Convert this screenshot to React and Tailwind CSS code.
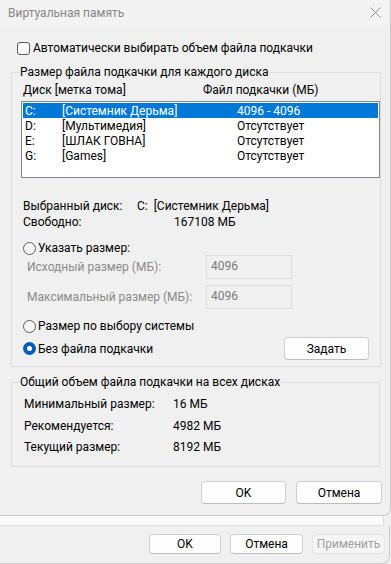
import React from "react";

const font = { fontFamily: 'Roboto, "Noto Sans", sans-serif' };

const disks = [
  { letter: "C:", label: "[Системник Дерьма]", size: "4096 - 4096", selected: true },
  { letter: "D:", label: "[Мультимедия]", size: "Отсутствует" },
  { letter: "E:", label: "[ШЛАК ГОВНА]", size: "Отсутствует" },
  { letter: "G:", label: "[Games]", size: "Отсутствует" },
];

const Radio = ({ checked, label }) => (
  <div className="flex items-center h-4">
    {checked ? (
      <span className="w-[13px] h-[13px] rounded-full bg-[#005fb8] flex items-center justify-center">
        <span className="w-[5px] h-[5px] rounded-full bg-white" />
      </span>
    ) : (
      <span className="w-[13px] h-[13px] rounded-full border border-[#5d5d5d] bg-[#f7f7f7]" />
    )}
    <span className="ml-[2px]">{label}</span>
  </div>
);

const Button = ({ children, className = "", disabled }) => (
  <button
    type="button"
    className={
      "flex items-center justify-center rounded-[4px] border text-[12px] " +
      (disabled
        ? "bg-[#f5f5f5] border-[#e5e5e5] text-[#a0a0a0] "
        : "bg-[#fdfdfd] border-[#d0d0d0] border-b-[#bcbcbc] text-black ") +
      className
    }
  >
    {children}
  </button>
);

const SizeInput = ({ label, value }) => (
  <div className="flex items-center">
    <span className="w-[179px] ml-[15px] text-[#8a8a8a]">{label}</span>
    <div className="w-[86px] h-[24px] border border-[#dcdcdc] bg-[#f0f0f0] text-[#7a7a7a] pl-[4px] pt-[2px] leading-4">
      {value}
    </div>
  </div>
);

export default function App() {
  return (
    <div
      className="w-[391px] h-[564px] bg-[#f0f0f0] text-[12px] leading-4 text-black overflow-hidden"
      style={font}
    >
      <div className="w-[391px] h-[516px] border-r border-b border-[#c8c8c8] rounded-br-[8px] flex flex-col">
        <div className="h-[25px] bg-[#f3f3f3] flex items-center justify-between pl-[8px] pr-[9px]">
          <span className="text-[#868686]">Виртуальная память</span>
          <svg width="11" height="11" viewBox="0 0 11 11">
            <path d="M0.5 0.5 L10.5 10.5 M10.5 0.5 L0.5 10.5" stroke="#8a8a8a" strokeWidth="1" />
          </svg>
        </div>

        <div className="flex items-center mt-[15px] ml-[17px]">
          <span className="w-[13px] h-[13px] rounded-[3px] border border-[#5a5a5a] bg-[#fbfbfb]" />
          <span className="ml-[3px]">Автоматически выбирать объем файла подкачки</span>
        </div>

        <fieldset className="ml-[11px] mt-[8px] w-[369px] h-[303px] border border-[#dcdcdc] px-0">
          <legend className="ml-[7px] px-[1px]">Размер файла подкачки для каждого диска</legend>
          <div className="flex mt-[2px] ml-[11px]">
            <span className="w-[180px]">Диск [метка тома]</span>
            <span>Файл подкачки (МБ)</span>
          </div>
          <div className="ml-[9px] mt-[3px] w-[359px] h-[77px] border border-[#828790] bg-white p-[1px]">
            {disks.map((d) => (
              <div
                key={d.letter}
                className={
                  "flex items-center h-[15px] leading-[14px] pl-[2px] " +
                  (d.selected ? "bg-[#0078d7] text-white" : "")
                }
              >
                <span className="w-[37px]">{d.letter}</span>
                <span className="w-[175px]">{d.label}</span>
                <span>{d.size}</span>
              </div>
            ))}
          </div>

          <div className="mt-[20px] ml-[11px]">
            <div className="flex">
              <span className="w-[114px]">Выбранный диск:</span>
              <span>C:&nbsp;&nbsp;[Системник Дерьма]</span>
            </div>
            <div className="flex">
              <span className="w-[151px]">Свободно:</span>
              <span>167108 МБ</span>
            </div>
          </div>

          <div className="mt-[10px] ml-[11px]">
            <Radio label="Указать размер:" />
          </div>
          <div className="mt-[-1px]">
            <SizeInput label="Исходный размер (МБ):" value="4096" />
          </div>
          <div className="mt-[6px]">
            <SizeInput label="Максимальный размер (МБ):" value="4096" />
          </div>
          <div className="mt-[9px] ml-[11px]">
            <Radio label="Размер по выбору системы" />
          </div>
          <div className="flex items-center mt-[3px]">
            <div className="ml-[11px] w-[261px]">
              <Radio checked label="Без файла подкачки" />
            </div>
            <Button className="w-[85px] h-[23px]">Задать</Button>
          </div>
        </fieldset>

        <fieldset className="ml-[11px] mt-[7px] w-[369px] h-[93px] border border-[#dcdcdc] px-0">
          <legend className="ml-[7px] px-[1px]">Общий объем файла подкачки на всех дисках</legend>
          <div className="ml-[12px] mt-[6px] flex flex-col gap-[5.5px]">
            <div className="flex">
              <span className="w-[149px]">Минимальный размер:</span>
              <span>16 МБ</span>
            </div>
            <div className="flex">
              <span className="w-[149px]">Рекомендуется:</span>
              <span>4982 МБ</span>
            </div>
            <div className="flex">
              <span className="w-[149px]">Текущий размер:</span>
              <span>8192 МБ</span>
            </div>
          </div>
        </fieldset>

        <div className="flex justify-end gap-[10px] mt-[14px] pr-[8px]">
          <Button className="w-[85px] h-[23px]">OK</Button>
          <Button className="w-[86px] h-[23px]">Отмена</Button>
        </div>
      </div>

      <div className="w-[384px] h-[10px] bg-[#fafafa] border-r border-b border-[#dedede]" />

      <div className="w-[390px] h-[38px] border-r border-b border-[#c8c8c8] rounded-br-[8px] flex items-start justify-end gap-[9px] pt-[8px] pr-[4px]">
        <Button className="w-[72px] h-[20px]">OK</Button>
        <Button className="w-[73px] h-[20px]">Отмена</Button>
        <Button disabled className="w-[73px] h-[20px]">Применить</Button>
      </div>
    </div>
  );
}
